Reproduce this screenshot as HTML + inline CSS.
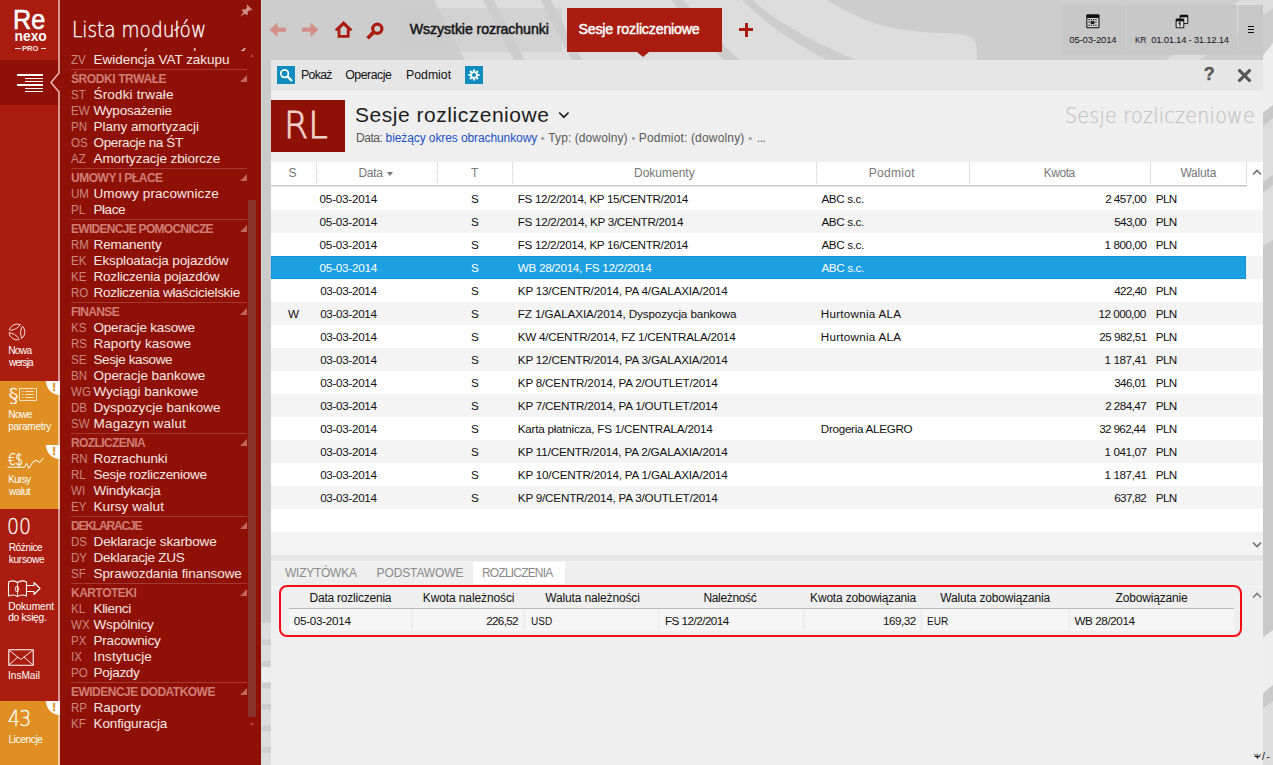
<!DOCTYPE html>
<html lang="pl">
<head>
<meta charset="utf-8">
<title>Sesje rozliczeniowe</title>
<style>
html,body{margin:0;padding:0}
body{width:1273px;height:765px;overflow:hidden;position:relative;background:#cdcdcd;font-family:"Liberation Sans",sans-serif;}
.b{position:absolute;box-sizing:border-box}
.t{position:absolute;white-space:nowrap;margin:0;padding:0}
svg{position:absolute;overflow:visible}
.lt{font-family:"DejaVu Sans Light","DejaVu Sans",sans-serif;font-weight:200}

.mi{font-size:13.5px;line-height:16px;color:#f6e8e5;width:190px;height:16px}
.mc{position:absolute;left:0;color:#c98880;font-size:13.6px;transform:scaleX(0.85);transform-origin:0 0}
.mn{position:absolute;left:22.5px}
.mh{position:absolute;left:11px;font-size:12px;line-height:14px;font-weight:bold;color:#cf7e76}
.ms{position:absolute;left:11px;width:176px;height:1px;background:#a63a30}
.mt{position:absolute;left:180px;width:0;height:0;border-left:7px solid transparent;border-bottom:7px solid #c0665d}

.row{position:absolute;left:271px;width:992px;height:23px;font-size:11.7px;line-height:23px;color:#111}
.row.alt{background:#f4f4f4}
.row.sel .fill{position:absolute;left:0;top:0;width:975.2px;height:23px;background:#1ba0e1;box-sizing:border-box;border:1px solid #0e94dc}
.row.sel{color:#fff}
.row span{position:absolute;top:0.20px;white-space:nowrap}
</style>
</head>
<body>

<svg id="bgdeco" width="1273" height="765" viewBox="0 0 1273 765" style="left:0;top:0">
<rect x="261" y="0" width="1012" height="765" fill="#cdcdcd"/>
<path d="M434 0 H827 C840 8 850 13 857.5 16.5 C872 23 885 27 899 29 C915 32 935 33 954 33.5 C970 34 977 40 977 50 V62 H466 Z" fill="#dddddd"/>
<path d="M483 0 H493.5 L525.5 62 H515 Z" fill="#cdcdcd"/>
<path d="M540.8 0 H550.8 L583 62 H573 Z" fill="#cdcdcd"/>
<path d="M671.5 0 H684 C700 22 722 45 742 62 H726 C705 42 688 22 671.5 0 Z" fill="#cdcdcd"/>
<path d="M742 0 H753 C765 12 777 20 790 27 C810 40 832 50 857 60 V62 H830 C815 54 805 48 800 45 C780 33 760 18 742 0 Z" fill="#cdcdcd"/>
<path d="M1164 62 C1190 40 1215 20 1240 0 H1273 V8 C1250 24 1225 42 1197 62 Z" fill="#dddddd"/>
<rect x="1263" y="56" width="10" height="709" fill="#c9c9c9"/>
<path d="M1263 55.5 L1273 43 V105 L1263 112.7 Z" fill="#eeeeee"/>
<path d="M1263 126.5 L1273 118 V175 L1263 182 Z M1263 193 L1273 185 V240 L1263 246 Z" fill="#dcdcdc"/>
<path d="M1263 637 L1273 630 V685 L1263 693.5 Z" fill="#eeeeee"/>
<path d="M1263 708 L1273 701 V765 H1263 Z" fill="#dcdcdc"/>
<rect x="262" y="60" width="9" height="705" fill="#cbcbcb"/>
<path d="M262 623 H271 V765 H262 Z" fill="#dedede"/>
<path d="M262 666.7 H271 V682.5 H262 Z" fill="#eeeeee"/>
<path d="M262 639.5 H271 V645.2 H262 Z M262 661.0 H271 V666.7 H262 Z M262 682.5 H271 V688.2 H262 Z M262 704.0 H271 V709.7 H262 Z M262 725.5 H271 V731.2 H262 Z M262 747.0 H271 V752.7 H262 Z" fill="#cecece"/>
</svg>
<div id="iconbar">
<div class="b" style="left:0px;top:0px;width:58px;height:765px;background:#a91c0f;"></div>
<div class="b" style="left:0px;top:60px;width:58px;height:45px;background:#8f1106;"></div>
<div class="t" style="top:2.30px;font-size:28px;line-height:36px;color:#fff;left:13.20px;letter-spacing:0.000px;transform:scaleX(0.9);transform-origin:0 0;-webkit-text-stroke:0.6px #fff;">Re</div>
<div class="t" style="top:27.92px;font-size:13.8px;line-height:18px;color:#fff;left:14.60px;font-weight:bold;letter-spacing:0.000px;">nexo</div>
<div class="t" style="top:43.57px;font-size:7.6px;line-height:10px;color:#f6e0dd;left:22.00px;font-weight:bold;letter-spacing:0.000px;">PRO</div>
<div class="b" style="left:15px;top:48px;width:5.5px;height:1.2px;background:#f3d6d2;"></div>
<div class="b" style="left:41px;top:48px;width:5.2px;height:1.2px;background:#f3d6d2;"></div>
<div class="b" style="left:17px;top:74px;width:26px;height:2px;background:#fff;"></div>
<div class="b" style="left:25px;top:78px;width:18px;height:1px;background:#fff;"></div>
<div class="b" style="left:25px;top:81px;width:18px;height:1px;background:#fff;"></div>
<div class="b" style="left:17px;top:84px;width:26px;height:2px;background:#fff;"></div>
<div class="b" style="left:25px;top:88px;width:18px;height:1px;background:#fff;"></div>
<div class="b" style="left:25px;top:91px;width:18px;height:1px;background:#fff;"></div>
<svg width="20" height="20" viewBox="-10 -10 20 20" style="left:6.5px;top:322.4px" fill="none" stroke="#f6ddd9" stroke-width="1" stroke-linecap="round" stroke-linejoin="round">
<path d="M-7.73 -2.07 A8.0 8.0 0 0 1 3.38 -7.25 Q-0.57 -2.13 -6.34 -1.70"/>
<path d="M5.66 -5.66 A8.0 8.0 0 0 1 4.59 6.55 Q2.13 0.57 4.64 -4.64"/>
<path d="M2.07 7.73 A8.0 8.0 0 0 1 -7.97 0.70 Q-1.56 1.56 1.70 6.34"/>
</svg>
<div class="t" style="top:344.00px;font-size:10.1px;line-height:13px;color:#fff;left:8.20px;letter-spacing:-0.660px;">Nowa</div>
<div class="t" style="top:356.00px;font-size:10.1px;line-height:13px;color:#fff;left:9.00px;letter-spacing:-0.900px;">wersja</div>
<div class="b" style="left:0px;top:381px;width:58px;height:64px;background:#e08f22;"></div>
<div class="t lt" style="top:383.34px;font-size:19.5px;line-height:25px;color:#fff;left:8.70px;transform:scaleX(1.0);transform-origin:0 0;-webkit-text-stroke:0.3px #fff;">§</div>
<svg width="19" height="14" viewBox="0 0 19 14" style="left:19px;top:388px" fill="none" stroke="#fff6e6" stroke-width="0.8">
<rect x="0.5" y="0.5" width="17" height="12"/>
<path d="M3 3.5 H4.6 M6.3 3.5 H14.8 M3 6.5 H4.6 M6.3 6.5 H14.8 M3 9.5 H4.6 M6.3 9.5 H14.8"/></svg>
<div class="t" style="top:408.00px;font-size:10.1px;line-height:13px;color:#fff;left:8.20px;letter-spacing:-0.510px;">Nowe</div>
<div class="t" style="top:420.00px;font-size:10.1px;line-height:13px;color:#fff;left:8.20px;letter-spacing:-0.282px;">parametry</div>
<div class="b" style="left:0px;top:445px;width:58px;height:64px;background:#e08f22;"></div>
<div class="t lt" style="top:449.12px;font-size:16.4px;line-height:21px;color:#fff;left:8.30px;letter-spacing:-0.600px;transform:scaleX(0.74);transform-origin:0 0;-webkit-text-stroke:0.3px #fff;">€$</div>
<svg width="40" height="14" viewBox="0 0 40 14" style="left:6px;top:456px" fill="none" stroke="#fff" stroke-width="1" stroke-linejoin="round" stroke-linecap="round">
<path d="M2 11.2 H18.5 L20.5 7.2 L22.7 12.5 L27 5.8 L30 4.4 L34 6.4 L37 2.2"/></svg>
<div class="t" style="top:472.50px;font-size:10.1px;line-height:13px;color:#fff;left:8.20px;letter-spacing:-0.720px;">Kursy</div>
<div class="t" style="top:484.70px;font-size:10.1px;line-height:13px;color:#fff;left:9.00px;letter-spacing:-0.496px;">walut</div>
<div class="t lt" style="top:512.48px;font-size:22px;line-height:29px;color:#fff;left:7.00px;letter-spacing:0.000px;transform:scaleX(0.86);transform-origin:0 0;-webkit-text-stroke:0.3px #fff;">00</div>
<div class="t" style="top:540.50px;font-size:10.1px;line-height:13px;color:#fff;left:8.70px;letter-spacing:-0.405px;">Różnice</div>
<div class="t" style="top:552.60px;font-size:10.1px;line-height:13px;color:#fff;left:8.70px;letter-spacing:-0.270px;">kursowe</div>
<svg width="36" height="20" viewBox="0 0 36 20" style="left:7px;top:578px" fill="none" stroke="#fff" stroke-width="1.1" stroke-linejoin="round">
<path d="M1.5 4 C5 2.3 8 2.5 10.5 4.5 C13 2.5 16 2.3 19.5 4 V18 C16 16.5 13 16.8 10.5 18.5 C8 16.8 5 16.5 1.5 18 Z"/>
<path d="M10.5 4.5 V18.5" stroke-width="0.8"/>
<path d="M19.5 7.5 H27 V4.5 L33 10.5 L27 16.5 V13.5 H19.5"/></svg>
<div class="t" style="top:582.87px;font-size:9.6px;line-height:12px;color:#fff;left:-282.60px;width:600px;text-align:center;transform:scaleX(0.85);transform-origin:50% 0;">0</div>
<div class="t" style="top:599.77px;font-size:10.2px;line-height:13px;color:#fff;left:8.20px;letter-spacing:-0.077px;">Dokument</div>
<div class="t" style="top:611.17px;font-size:10.2px;line-height:13px;color:#fff;left:8.20px;letter-spacing:-0.281px;">do księg.</div>
<svg width="27" height="18" viewBox="0 0 27 18" style="left:7.5px;top:648.5px" fill="none" stroke="#fff" stroke-width="1.1" stroke-linejoin="round">
<rect x="0.8" y="0.8" width="24.4" height="15.4"/>
<path d="M1.5 1.5 L12.8 10.5 L24.5 1.5 M1.5 15.5 L10 8 M24.5 15.5 L15.8 8" stroke-width="0.9"/></svg>
<div class="t" style="top:668.70px;font-size:10.1px;line-height:13px;color:#fff;left:8.00px;letter-spacing:0.000px;">InsMail</div>
<div class="b" style="left:0px;top:701px;width:58px;height:64px;background:#e08f22;"></div>
<div class="t lt" style="top:704.18px;font-size:22px;line-height:29px;color:#fff;left:8.00px;letter-spacing:-0.900px;transform:scaleX(0.86);transform-origin:0 0;-webkit-text-stroke:0.3px #fff;">43</div>
<div class="t" style="top:732.60px;font-size:10.1px;line-height:13px;color:#fff;left:8.40px;letter-spacing:-0.348px;">Licencje</div>
<svg width="14" height="765" viewBox="48 0 14 765" style="left:48px;top:0">
<path d="M58 0 V73.5 L50 82.5 L58 91.5 V765 H62 V0 Z" fill="#8f1106"/>
<path d="M59 0 V73 L51 82.5 L59 92 V765" fill="none" stroke="#e9b4ad" stroke-width="1.6"/>
<path d="M59 381 V509 M59 701 V765" fill="none" stroke="#f6d9ae" stroke-width="1.6"/>
</svg>
<svg width="14" height="14" viewBox="0 0 14 14" style="left:46px;top:381px"><path d="M0 0 H14 V14 A14 14 0 0 1 0 0 Z" fill="#fff"/></svg>
<div class="t" style="top:379.52px;font-size:11.5px;line-height:15px;color:#e08f22;left:-245.80px;width:600px;text-align:center;font-weight:bold;-webkit-text-stroke:0.45px #e08f22;">!</div>
<svg width="14" height="14" viewBox="0 0 14 14" style="left:46px;top:445px"><path d="M0 0 H14 V14 A14 14 0 0 1 0 0 Z" fill="#fff"/></svg>
<div class="t" style="top:443.52px;font-size:11.5px;line-height:15px;color:#e08f22;left:-245.80px;width:600px;text-align:center;font-weight:bold;-webkit-text-stroke:0.45px #e08f22;">!</div>
<svg width="14" height="14" viewBox="0 0 14 14" style="left:46px;top:701px"><path d="M0 0 H14 V14 A14 14 0 0 1 0 0 Z" fill="#fff"/></svg>
<div class="t" style="top:699.52px;font-size:11.5px;line-height:15px;color:#e08f22;left:-245.80px;width:600px;text-align:center;font-weight:bold;-webkit-text-stroke:0.45px #e08f22;">!</div>
</div>
<div id="modules">
<div class="b" style="left:60px;top:0px;width:201px;height:765px;background:#8f1106;"></div>
<div class="b" style="left:261px;top:0px;width:1px;height:765px;background:#d9dfe1;"></div>
<div class="t lt" style="top:15.89px;font-size:21.1px;line-height:27px;color:#fff;left:71.80px;letter-spacing:0.000px;transform:scaleX(0.877);transform-origin:0 0;-webkit-text-stroke:0.35px #fff;">Lista modułów</div>
<svg width="13" height="13" viewBox="0 0 13 13" style="left:239.5px;top:4px" fill="#cf8d86" stroke="none">
<path d="M7.2 0.6 L12.4 5.8 L11 6.4 L9.6 5.9 L7.6 7.9 L7.8 10.4 L6.6 11.2 L4.9 9.5 L0.3 12.7 L3.5 8.1 L1.8 6.4 L2.6 5.2 L5.1 5.4 L7.1 3.4 L6.6 2 Z"/></svg>
<div class="b" style="left:60px;top:48px;width:201px;height:717px;overflow:hidden">
<div class="t mi" style="left:11px;top:-12.18px"><span class="mc">ZS</span><span class="mn">Ewidencja VAT sprzedaży</span></div>
<div class="t mi" style="left:11px;top:3.82px"><span class="mc">ZV</span><span class="mn" style="left:22.50px;letter-spacing:-0.028px">Ewidencja VAT zakupu</span></div>
<div class="ms" style="top:21px"></div>
<div class="mh" style="top:24.24px;left:11.00px;letter-spacing:-0.405px">ŚRODKI TRWAŁE</div>
<div class="mt" style="top:27px"></div>
<div class="t mi" style="left:11px;top:38.62px"><span class="mc">ST</span><span class="mn" style="left:22.50px;letter-spacing:0.164px">Środki trwałe</span></div>
<div class="t mi" style="left:11px;top:54.62px"><span class="mc">EW</span><span class="mn" style="left:22.50px;letter-spacing:-0.252px">Wyposażenie</span></div>
<div class="t mi" style="left:11px;top:70.62px"><span class="mc">PN</span><span class="mn" style="left:22.50px;letter-spacing:-0.022px">Plany amortyzacji</span></div>
<div class="t mi" style="left:11px;top:86.62px"><span class="mc">OS</span><span class="mn" style="left:22.50px;letter-spacing:-0.374px">Operacje na ŚT</span></div>
<div class="t mi" style="left:11px;top:102.62px"><span class="mc">AZ</span><span class="mn" style="left:22.50px;letter-spacing:-0.086px">Amortyzacje zbiorcze</span></div>
<div class="ms" style="top:120px"></div>
<div class="mh" style="top:123.24px;left:11.00px;letter-spacing:-0.472px">UMOWY I PŁACE</div>
<div class="mt" style="top:126px"></div>
<div class="t mi" style="left:11px;top:137.62px"><span class="mc">UM</span><span class="mn" style="left:22.50px;letter-spacing:0.090px">Umowy pracownicze</span></div>
<div class="t mi" style="left:11px;top:153.62px"><span class="mc">PL</span><span class="mn" style="left:22.50px;letter-spacing:-0.450px">Płace</span></div>
<div class="ms" style="top:171px"></div>
<div class="mh" style="top:174.24px;left:11.00px;letter-spacing:-0.706px">EWIDENCJE POMOCNICZE</div>
<div class="mt" style="top:177px"></div>
<div class="t mi" style="left:11px;top:188.62px"><span class="mc">RM</span><span class="mn" style="left:22.50px;letter-spacing:-0.113px">Remanenty</span></div>
<div class="t mi" style="left:11px;top:204.62px"><span class="mc">EK</span><span class="mn" style="left:22.50px;letter-spacing:-0.116px">Eksploatacja pojazdów</span></div>
<div class="t mi" style="left:11px;top:220.62px"><span class="mc">KE</span><span class="mn" style="left:22.50px;letter-spacing:-0.199px">Rozliczenia pojazdów</span></div>
<div class="t mi" style="left:11px;top:236.62px"><span class="mc">RO</span><span class="mn" style="left:22.50px;letter-spacing:-0.280px">Rozliczenia właścicielskie</span></div>
<div class="ms" style="top:254px"></div>
<div class="mh" style="top:257.24px;left:11.00px;letter-spacing:-0.660px">FINANSE</div>
<div class="mt" style="top:260px"></div>
<div class="t mi" style="left:11px;top:271.62px"><span class="mc">KS</span><span class="mn" style="left:22.50px;letter-spacing:-0.193px">Operacje kasowe</span></div>
<div class="t mi" style="left:11px;top:287.62px"><span class="mc">RS</span><span class="mn" style="left:22.50px;letter-spacing:0.055px">Raporty kasowe</span></div>
<div class="t mi" style="left:11px;top:303.62px"><span class="mc">SE</span><span class="mn" style="left:22.50px;letter-spacing:-0.384px">Sesje kasowe</span></div>
<div class="t mi" style="left:11px;top:319.62px"><span class="mc">BN</span><span class="mn" style="left:22.50px;letter-spacing:-0.048px">Operacje bankowe</span></div>
<div class="t mi" style="left:11px;top:335.62px"><span class="mc">WG</span><span class="mn" style="left:22.50px;letter-spacing:-0.013px">Wyciągi bankowe</span></div>
<div class="t mi" style="left:11px;top:351.62px"><span class="mc">DB</span><span class="mn" style="left:22.50px;letter-spacing:0.016px">Dyspozycje bankowe</span></div>
<div class="t mi" style="left:11px;top:367.62px"><span class="mc">SW</span><span class="mn" style="left:22.50px;letter-spacing:0.195px">Magazyn walut</span></div>
<div class="ms" style="top:385px"></div>
<div class="mh" style="top:388.24px;left:11.00px;letter-spacing:-0.594px">ROZLICZENIA</div>
<div class="mt" style="top:391px"></div>
<div class="t mi" style="left:11px;top:402.62px"><span class="mc">RN</span><span class="mn" style="left:22.50px;letter-spacing:-0.108px">Rozrachunki</span></div>
<div class="t mi" style="left:11px;top:418.62px"><span class="mc">RL</span><span class="mn" style="left:22.50px;letter-spacing:-0.280px">Sesje rozliczeniowe</span></div>
<div class="t mi" style="left:11px;top:434.62px"><span class="mc">WI</span><span class="mn" style="left:22.50px;letter-spacing:-0.200px">Windykacja</span></div>
<div class="t mi" style="left:11px;top:450.62px"><span class="mc">EY</span><span class="mn" style="left:22.50px;letter-spacing:0.063px">Kursy walut</span></div>
<div class="ms" style="top:468px"></div>
<div class="mh" style="top:471.24px;left:11.00px;letter-spacing:-1.160px">DEKLARACJE</div>
<div class="mt" style="top:474px"></div>
<div class="t mi" style="left:11px;top:485.62px"><span class="mc">DS</span><span class="mn" style="left:22.50px;letter-spacing:-0.115px">Deklaracje skarbowe</span></div>
<div class="t mi" style="left:11px;top:501.62px"><span class="mc">DY</span><span class="mn" style="left:22.50px;letter-spacing:-0.256px">Deklaracje ZUS</span></div>
<div class="t mi" style="left:11px;top:517.62px"><span class="mc">SF</span><span class="mn" style="left:22.50px;letter-spacing:-0.085px">Sprawozdania finansowe</span></div>
<div class="ms" style="top:535px"></div>
<div class="mh" style="top:538.24px;left:11.00px;letter-spacing:-0.495px">KARTOTEKI</div>
<div class="mt" style="top:541px"></div>
<div class="t mi" style="left:11px;top:552.62px"><span class="mc">KL</span><span class="mn" style="left:22.50px;letter-spacing:-0.330px">Klienci</span></div>
<div class="t mi" style="left:11px;top:568.62px"><span class="mc">WX</span><span class="mn" style="left:22.50px;letter-spacing:-0.157px">Wspólnicy</span></div>
<div class="t mi" style="left:11px;top:584.62px"><span class="mc">PX</span><span class="mn" style="left:22.50px;letter-spacing:-0.200px">Pracownicy</span></div>
<div class="t mi" style="left:11px;top:600.62px"><span class="mc">IX</span><span class="mn" style="left:22.50px;letter-spacing:0.140px">Instytucje</span></div>
<div class="t mi" style="left:11px;top:616.62px"><span class="mc">PO</span><span class="mn" style="left:22.50px;letter-spacing:-0.285px">Pojazdy</span></div>
<div class="ms" style="top:634px"></div>
<div class="mh" style="top:637.24px;left:11.00px;letter-spacing:-0.520px">EWIDENCJE DODATKOWE</div>
<div class="mt" style="top:640px"></div>
<div class="t mi" style="left:11px;top:651.62px"><span class="mc">RP</span><span class="mn" style="left:22.50px;letter-spacing:0.000px">Raporty</span></div>
<div class="t mi" style="left:11px;top:667.62px"><span class="mc">KF</span><span class="mn" style="left:22.50px;letter-spacing:-0.115px">Konfiguracja</span></div>
</div>
<div class="b" style="left:248px;top:200px;width:8px;height:517px;background:#8a332d;"></div>
<div class="b" style="left:250px;top:54px;width:0;height:0;border-left:2.5px solid transparent;border-right:2.5px solid transparent;border-bottom:3px solid #a9473e"></div>
<div class="b" style="left:250px;top:723px;width:0;height:0;border-left:2.5px solid transparent;border-right:2.5px solid transparent;border-top:3px solid #a9473e"></div>
</div>
<div id="topbar">
<svg width="120" height="24" viewBox="266 18 120 24" style="left:266px;top:18px">
<path d="M269.5 29.7 L277.5 22.5 V27.6 H286 V31.8 H277.5 V36.9 Z" fill="#d48f88"/>
<path d="M318.5 29.7 L310.5 22.5 V27.6 H302 V31.8 H310.5 V36.9 Z" fill="#d48f88"/>
<path d="M343.6 21 L352.4 29.6 L350.6 31.3 L349.6 30.3 V37.7 H337.6 V30.3 L336.6 31.3 L334.8 29.6 Z M340.4 28.6 V35 H346.8 V28.6 L343.6 25.4 Z" fill="#a91c0f" fill-rule="evenodd"/>
<circle cx="377.3" cy="28.8" r="4.6" fill="none" stroke="#a91c0f" stroke-width="3.2"/>
<path d="M373.3 32.6 L367.6 38.2" stroke="#a91c0f" stroke-width="3.6" stroke-linecap="butt" fill="none"/>
</svg>
<div class="b" style="left:398px;top:8px;width:163.5px;height:44px;background:rgba(203,203,203,0.63);"></div>
<div class="t" style="top:19.68px;font-size:14.2px;line-height:18px;color:#151515;left:409.80px;letter-spacing:-0.104px;-webkit-text-stroke:0.5px #151515;">Wszystkie rozrachunki</div>
<div class="b" style="left:567px;top:8px;width:155px;height:44px;background:#a91c0f;"></div>
<div class="b" style="left:637px;top:52px;width:0;height:0;border-left:6px solid transparent;border-right:6px solid transparent;border-top:5.5px solid #a91c0f"></div>
<div class="t" style="top:19.68px;font-size:14.2px;line-height:18px;color:#fff;left:578.40px;letter-spacing:-0.180px;-webkit-text-stroke:0.45px #fff;">Sesje rozliczeniowe</div>
<div class="b" style="left:739px;top:28px;width:14px;height:3px;background:#a91c0f;"></div>
<div class="b" style="left:744.5px;top:22.5px;width:3px;height:14px;background:#a91c0f;"></div>
<div class="b" style="left:1061.5px;top:5px;width:63px;height:50px;background:#c8c8c8;"></div>
<div class="b" style="left:1126px;top:5px;width:110.7px;height:50px;background:#c8c8c8;"></div>
<div class="b" style="left:1238.2px;top:5px;width:24.8px;height:50px;background:#c8c8c8;"></div>
<svg width="14" height="15" viewBox="0 0 14 15" style="left:1085.8px;top:13.6px">
<rect x="0.3" y="0.3" width="13.2" height="14" rx="1" fill="#101010"/>
<rect x="1.4" y="4" width="11" height="9.2" fill="#dcdcdc"/>
<g fill="#1a1a1a"><rect x="2.4" y="5" width="1.3" height="1.3"/><rect x="4.7" y="5" width="1.3" height="1.3"/><rect x="7" y="5" width="1.3" height="1.3"/><rect x="9.3" y="5" width="1.3" height="1.3"/>
<rect x="2.4" y="7.6" width="1.3" height="1.3"/><rect x="4.6" y="7" width="3.8" height="3"/><rect x="9.3" y="7.6" width="1.3" height="1.3"/>
<rect x="2.4" y="10.6" width="1.3" height="1.3"/><rect x="4.7" y="10.6" width="1.3" height="1.3"/><rect x="7" y="10.6" width="1.3" height="1.3"/><rect x="9.3" y="10.6" width="1.3" height="1.3"/></g>
</svg>
<div class="t" style="top:34.31px;font-size:9.5px;line-height:12px;color:#14141e;left:1069.30px;letter-spacing:-0.140px;">05-03-2014</div>
<svg width="14" height="15" viewBox="0 0 14 15" style="left:1174.5px;top:13.5px">
<rect x="4.6" y="0.7" width="8.7" height="9.4" rx="1.3" fill="#101010"/>
<rect x="5.6" y="3.3" width="6.7" height="5.8" fill="#d6d6d6"/>
<rect x="0.6" y="4.6" width="8.7" height="9.7" rx="1.3" fill="#101010"/>
<rect x="1.6" y="7.4" width="6.7" height="5.9" fill="#dedede"/>
<path d="M3.6 9.6 L5 8.4 V12.3" stroke="#101010" stroke-width="1.1" fill="none"/>
</svg>
<div class="t" style="top:34.31px;font-size:9.5px;line-height:12px;color:#14141e;left:1134.50px;letter-spacing:0.000px;transform:scaleX(0.86);transform-origin:0 0;">KR</div>
<div class="t" style="top:34.31px;font-size:9.5px;line-height:12px;color:#14141e;left:1151.30px;letter-spacing:-0.265px;">01.01.14 - 31.12.14</div>
<div class="b" style="left:1247.8px;top:25.8px;width:6.4px;height:1.3px;background:#111;"></div>
<div class="b" style="left:1247.8px;top:29px;width:6.4px;height:1.3px;background:#111;"></div>
<div class="b" style="left:1247.8px;top:32.2px;width:6.4px;height:1.3px;background:#111;"></div>
</div>
<div id="main">
<div class="b" style="left:271px;top:60px;width:992px;height:30px;background:#e6e6e6;"></div>
<div class="b" style="left:271px;top:90px;width:992px;height:675px;background:#efefef;"></div>
<div class="b" style="left:277px;top:66px;width:18px;height:18px;background:#0d8cbd;"></div>
<svg width="18" height="18" viewBox="0 0 18 18" style="left:277px;top:66px" fill="none" stroke="#fff">
<circle cx="7.6" cy="7.6" r="3.8" stroke-width="1.7"/><path d="M10.6 10.6 L14.4 14.4" stroke-width="2.2" stroke-linecap="round"/></svg>
<div class="t" style="top:66.74px;font-size:12.3px;line-height:16px;color:#111;left:301.00px;letter-spacing:-0.675px;">Pokaż</div>
<div class="t" style="top:66.74px;font-size:12.3px;line-height:16px;color:#111;left:345.30px;letter-spacing:-0.489px;">Operacje</div>
<div class="t" style="top:66.74px;font-size:12.3px;line-height:16px;color:#111;left:406.00px;letter-spacing:0.000px;">Podmiot</div>
<div class="b" style="left:465px;top:66px;width:18px;height:18px;background:#0d8cbd;"></div>
<svg width="18" height="18" viewBox="-9 -9 18 18" style="left:465px;top:66px" fill="none" stroke="#fff">
<circle r="2.9" stroke-width="1.7"/>
<path d="M0 -3.6 V-5.6 M0 3.6 V5.6 M-3.6 0 H-5.6 M3.6 0 H5.6 M2.55 2.55 L3.95 3.95 M-2.55 2.55 L-3.95 3.95 M2.55 -2.55 L3.95 -3.95 M-2.55 -2.55 L-3.95 -3.95" stroke-width="2.1"/></svg>
<div class="t" style="top:63.46px;font-size:18px;line-height:23px;color:#575757;left:909.30px;width:600px;text-align:center;font-weight:bold;-webkit-text-stroke:0.3px #575757;">?</div>
<svg width="15" height="15" viewBox="0 0 15 15" style="left:1237.4px;top:67.5px"><path d="M1.6 1.6 L13.4 13.4 M13.4 1.6 L1.6 13.4" stroke="#555" stroke-width="3" fill="none"/></svg>
<div class="b" style="left:271px;top:100px;width:74px;height:52px;background:#8f1106;"></div>
<div class="t lt" style="top:101.33px;font-size:38px;line-height:49px;color:#f1cfcb;left:284.20px;letter-spacing:0.000px;transform:scaleX(0.92);transform-origin:0 0;-webkit-text-stroke:0.95px #f1cfcb;">RL</div>
<div class="t" style="top:101.22px;font-size:21px;line-height:27px;color:#1c1c1c;left:355.00px;letter-spacing:0.525px;">Sesje rozliczeniowe</div>
<svg width="12" height="8" viewBox="0 0 12 8" style="left:558px;top:110.5px"><path d="M1.2 1.5 L5.9 6.2 L10.6 1.5" fill="none" stroke="#222" stroke-width="1.7"/></svg>
<div id="filterline">
<div class="t" style="top:129.84px;font-size:12px;line-height:16px;color:#5a5a5a;left:356.00px;letter-spacing:-0.473px;">Data:</div>
<div class="t" style="top:129.84px;font-size:12px;line-height:16px;color:#1c4fc4;left:385.60px;letter-spacing:-0.097px;">bieżący okres obrachunkowy</div>
<div class="t" style="top:131.19px;font-size:11px;line-height:14px;color:#9a9a9a;left:242.80px;width:600px;text-align:center;">•</div>
<div class="t" style="top:129.84px;font-size:12px;line-height:16px;color:#5a5a5a;left:548.30px;letter-spacing:0.090px;">Typ: (dowolny)</div>
<div class="t" style="top:131.19px;font-size:11px;line-height:14px;color:#9a9a9a;left:333.50px;width:600px;text-align:center;">•</div>
<div class="t" style="top:129.84px;font-size:12px;line-height:16px;color:#5a5a5a;left:638.80px;letter-spacing:0.164px;">Podmiot: (dowolny)</div>
<div class="t" style="top:131.19px;font-size:11px;line-height:14px;color:#9a9a9a;left:450.30px;width:600px;text-align:center;">•</div>
<div class="t" style="top:129.84px;font-size:12px;line-height:16px;color:#5a5a5a;left:756.80px;letter-spacing:-0.495px;">...</div>
</div>
<div class="t lt" style="top:102.56px;font-size:20.6px;line-height:27px;color:#c4c4c4;left:1065.10px;letter-spacing:0.280px;transform:scaleX(0.925);transform-origin:0 0;-webkit-text-stroke:0.25px #c4c4c4;">Sesje rozliczeniowe</div>
<div class="b" style="left:271px;top:162px;width:992px;height:394px;background:#fff;"></div>
<div class="b" style="left:315.5px;top:163px;width:0;height:21px;border-left:1px dotted #c9c9c9"></div>
<div class="b" style="left:436.5px;top:163px;width:0;height:21px;border-left:1px dotted #c9c9c9"></div>
<div class="b" style="left:511.8px;top:163px;width:0;height:21px;border-left:1px dotted #c9c9c9"></div>
<div class="b" style="left:815.8px;top:163px;width:0;height:21px;border-left:1px dotted #c9c9c9"></div>
<div class="b" style="left:968.5px;top:163px;width:0;height:21px;border-left:1px dotted #c9c9c9"></div>
<div class="b" style="left:1149.7px;top:163px;width:0;height:21px;border-left:1px dotted #c9c9c9"></div>
<div class="b" style="left:1245.9px;top:163px;width:0;height:21px;border-left:1px dotted #c9c9c9"></div>
<div class="b" style="left:271px;top:184.5px;width:975.5px;height:1px;background:#c8c8c8;"></div>
<div class="b" style="left:271px;top:185.5px;width:975.5px;height:1px;background:#e4e4e4;"></div>
<div class="t" style="top:165.44px;font-size:12px;line-height:16px;color:#777;left:288.60px;letter-spacing:0.000px;">S</div>
<div class="t" style="top:165.44px;font-size:12px;line-height:16px;color:#777;left:358.50px;letter-spacing:-0.300px;">Data</div>
<div class="t" style="top:165.44px;font-size:12px;line-height:16px;color:#777;left:471.00px;letter-spacing:0.000px;">T</div>
<div class="t" style="top:165.44px;font-size:12px;line-height:16px;color:#777;left:634.00px;letter-spacing:0.000px;">Dokumenty</div>
<div class="t" style="top:165.44px;font-size:12px;line-height:16px;color:#777;left:868.80px;letter-spacing:0.285px;">Podmiot</div>
<div class="t" style="top:165.44px;font-size:12px;line-height:16px;color:#777;left:1043.80px;letter-spacing:-0.495px;">Kwota</div>
<div class="t" style="top:165.44px;font-size:12px;line-height:16px;color:#777;left:1180.40px;letter-spacing:-0.198px;">Waluta</div>
<div class="b" style="left:386.8px;top:172px;width:0;height:0;border-left:3.8px solid transparent;border-right:3.8px solid transparent;border-top:4px solid #777"></div>
<div class="row" style="top:187px"><span class="c1" style="left:48.60px;letter-spacing:-0.230px">05-03-2014</span><span class="c2" style="left:200.10px;letter-spacing:0.000px">S</span><span class="c3" style="left:246.80px;letter-spacing:-0.363px">FS 12/2/2014, KP 15/CENTR/2014</span><span class="c4" style="left:550.40px;letter-spacing:-0.360px">ABC s.c.</span><span class="c5" style="left:834.20px;letter-spacing:-0.566px">2 457,00</span><span class="c6" style="left:884.70px;letter-spacing:-0.585px">PLN</span></div>
<div class="row alt" style="top:210px"><span class="c1" style="left:48.60px;letter-spacing:-0.230px">05-03-2014</span><span class="c2" style="left:200.10px;letter-spacing:0.000px">S</span><span class="c3" style="left:246.80px;letter-spacing:-0.315px">FS 12/2/2014, KP 3/CENTR/2014</span><span class="c4" style="left:550.40px;letter-spacing:-0.360px">ABC s.c.</span><span class="c5" style="left:843.20px;letter-spacing:-0.612px">543,00</span><span class="c6" style="left:884.70px;letter-spacing:-0.585px">PLN</span></div>
<div class="row" style="top:233px"><span class="c1" style="left:48.60px;letter-spacing:-0.230px">05-03-2014</span><span class="c2" style="left:200.10px;letter-spacing:0.000px">S</span><span class="c3" style="left:246.80px;letter-spacing:-0.363px">FS 12/2/2014, KP 16/CENTR/2014</span><span class="c4" style="left:550.40px;letter-spacing:-0.360px">ABC s.c.</span><span class="c5" style="left:833.60px;letter-spacing:-0.437px">1 800,00</span><span class="c6" style="left:884.70px;letter-spacing:-0.585px">PLN</span></div>
<div class="row alt sel" style="top:256px"><div class="fill"></div><span class="c1" style="left:48.60px;letter-spacing:-0.230px">05-03-2014</span><span class="c2" style="left:200.10px;letter-spacing:0.000px">S</span><span class="c3" style="left:246.80px;letter-spacing:-0.305px">WB 28/2014, FS 12/2/2014</span><span class="c4" style="left:550.40px;letter-spacing:-0.360px">ABC s.c.</span></div>
<div class="row" style="top:279px"><span class="c1" style="left:49.20px;letter-spacing:-0.330px">03-03-2014</span><span class="c2" style="left:200.10px;letter-spacing:0.000px">S</span><span class="c3" style="left:246.80px;letter-spacing:-0.211px">KP 13/CENTR/2014, PA 4/GALAXIA/2014</span><span class="c5" style="left:843.20px;letter-spacing:-0.612px">422,40</span><span class="c6" style="left:884.70px;letter-spacing:-0.585px">PLN</span></div>
<div class="row alt" style="top:302px"><span class="c0" style="left:16.90px;letter-spacing:0.000px">W</span><span class="c1" style="left:49.20px;letter-spacing:-0.330px">03-03-2014</span><span class="c2" style="left:200.10px;letter-spacing:0.000px">S</span><span class="c3" style="left:246.80px;letter-spacing:-0.115px">FZ 1/GALAXIA/2014, Dyspozycja bankowa</span><span class="c4" style="left:549.80px;letter-spacing:0.240px">Hurtownia ALA</span><span class="c5" style="left:827.60px;letter-spacing:-0.541px">12 000,00</span><span class="c6" style="left:884.70px;letter-spacing:-0.585px">PLN</span></div>
<div class="row" style="top:325px"><span class="c1" style="left:49.20px;letter-spacing:-0.330px">03-03-2014</span><span class="c2" style="left:200.10px;letter-spacing:0.000px">S</span><span class="c3" style="left:246.80px;letter-spacing:-0.254px">KW 4/CENTR/2014, FZ 1/CENTRALA/2014</span><span class="c4" style="left:549.80px;letter-spacing:0.240px">Hurtownia ALA</span><span class="c5" style="left:828.20px;letter-spacing:-0.495px">25 982,51</span><span class="c6" style="left:884.70px;letter-spacing:-0.585px">PLN</span></div>
<div class="row alt" style="top:348px"><span class="c1" style="left:49.20px;letter-spacing:-0.330px">03-03-2014</span><span class="c2" style="left:200.10px;letter-spacing:0.000px">S</span><span class="c3" style="left:246.80px;letter-spacing:-0.211px">KP 12/CENTR/2014, PA 3/GALAXIA/2014</span><span class="c5" style="left:833.60px;letter-spacing:-0.437px">1 187,41</span><span class="c6" style="left:884.70px;letter-spacing:-0.585px">PLN</span></div>
<div class="row" style="top:371px"><span class="c1" style="left:49.20px;letter-spacing:-0.330px">03-03-2014</span><span class="c2" style="left:200.10px;letter-spacing:0.000px">S</span><span class="c3" style="left:246.80px;letter-spacing:-0.211px">KP 8/CENTR/2014, PA 2/OUTLET/2014</span><span class="c5" style="left:843.20px;letter-spacing:-0.612px">346,01</span><span class="c6" style="left:884.70px;letter-spacing:-0.585px">PLN</span></div>
<div class="row alt" style="top:394px"><span class="c1" style="left:49.20px;letter-spacing:-0.330px">03-03-2014</span><span class="c2" style="left:200.10px;letter-spacing:0.000px">S</span><span class="c3" style="left:246.80px;letter-spacing:-0.211px">KP 7/CENTR/2014, PA 1/OUTLET/2014</span><span class="c5" style="left:834.20px;letter-spacing:-0.566px">2 284,47</span><span class="c6" style="left:884.70px;letter-spacing:-0.585px">PLN</span></div>
<div class="row" style="top:417px"><span class="c1" style="left:49.20px;letter-spacing:-0.330px">03-03-2014</span><span class="c2" style="left:200.10px;letter-spacing:0.000px">S</span><span class="c3" style="left:246.80px;letter-spacing:-0.249px">Karta płatnicza, FS 1/CENTRALA/2014</span><span class="c4" style="left:549.80px;letter-spacing:-0.302px">Drogeria ALEGRO</span><span class="c5" style="left:828.20px;letter-spacing:-0.653px">32 962,44</span><span class="c6" style="left:884.70px;letter-spacing:-0.585px">PLN</span></div>
<div class="row alt" style="top:440px"><span class="c1" style="left:49.20px;letter-spacing:-0.330px">03-03-2014</span><span class="c2" style="left:200.10px;letter-spacing:0.000px">S</span><span class="c3" style="left:246.80px;letter-spacing:-0.185px">KP 11/CENTR/2014, PA 2/GALAXIA/2014</span><span class="c5" style="left:833.60px;letter-spacing:-0.437px">1 041,07</span><span class="c6" style="left:884.70px;letter-spacing:-0.585px">PLN</span></div>
<div class="row" style="top:463px"><span class="c1" style="left:49.20px;letter-spacing:-0.330px">03-03-2014</span><span class="c2" style="left:200.10px;letter-spacing:0.000px">S</span><span class="c3" style="left:246.80px;letter-spacing:-0.211px">KP 10/CENTR/2014, PA 1/GALAXIA/2014</span><span class="c5" style="left:833.60px;letter-spacing:-0.437px">1 187,41</span><span class="c6" style="left:884.70px;letter-spacing:-0.585px">PLN</span></div>
<div class="row alt" style="top:486px"><span class="c1" style="left:49.20px;letter-spacing:-0.330px">03-03-2014</span><span class="c2" style="left:200.10px;letter-spacing:0.000px">S</span><span class="c3" style="left:246.80px;letter-spacing:-0.211px">KP 9/CENTR/2014, PA 3/OUTLET/2014</span><span class="c5" style="left:843.20px;letter-spacing:-0.612px">637,82</span><span class="c6" style="left:884.70px;letter-spacing:-0.585px">PLN</span></div>
<div class="b" style="left:271px;top:532px;width:992px;height:24px;background:#f3f3f3;"></div>
<svg width="10" height="7" viewBox="0 0 10 7" style="left:1252px;top:168.5px"><path d="M1 5.5 L5 1.5 L9 5.5" fill="none" stroke="#707070" stroke-width="1.7"/></svg>
<svg width="10" height="7" viewBox="0 0 10 7" style="left:1252px;top:541px"><path d="M1 1.5 L5 5.5 L9 1.5" fill="none" stroke="#707070" stroke-width="1.7"/></svg>
<div class="b" style="left:271px;top:555px;width:992px;height:6px;background:#e6e6e6;"></div>
<div class="b" style="left:271px;top:560.5px;width:992px;height:1px;background:#f6f6f6;"></div>
<div class="b" style="left:473px;top:562px;width:91.6px;height:22px;background:#fff;"></div>
<div class="t" style="top:564.54px;font-size:12px;line-height:16px;color:#8a8a8a;left:285.00px;letter-spacing:-0.259px;">WIZYTÓWKA</div>
<div class="t" style="top:564.54px;font-size:12px;line-height:16px;color:#8a8a8a;left:376.60px;letter-spacing:-0.130px;">PODSTAWOWE</div>
<div class="t" style="top:564.54px;font-size:12px;line-height:16px;color:#8a8a8a;left:482.00px;letter-spacing:-0.810px;">ROZLICZENIA</div>
<div class="b" style="left:271px;top:586px;width:992px;height:1px;background:#f7f7f7;"></div>
<div class="b" style="left:289.4px;top:609px;width:944.6px;height:22px;background:#f6f6f6;"></div>
<div class="b" style="left:410.6px;top:609px;width:2.4px;height:22px;background:#efefef;"></div>
<div class="b" style="left:523.3px;top:609px;width:2.4px;height:22px;background:#efefef;"></div>
<div class="b" style="left:658px;top:609px;width:2.4px;height:22px;background:#efefef;"></div>
<div class="b" style="left:802.4px;top:609px;width:2.4px;height:22px;background:#efefef;"></div>
<div class="b" style="left:920.2px;top:609px;width:2.4px;height:22px;background:#efefef;"></div>
<div class="b" style="left:1068.3px;top:609px;width:2.4px;height:22px;background:#efefef;"></div>
<div class="b" style="left:289.4px;top:608px;width:944.6px;height:1.2px;background:#b9b9b9;"></div>
<div class="t" style="top:589.64px;font-size:12px;line-height:16px;color:#111;left:309.50px;letter-spacing:-0.222px;">Data rozliczenia</div>
<div class="t" style="top:589.64px;font-size:12px;line-height:16px;color:#111;left:422.80px;letter-spacing:-0.114px;">Kwota należności</div>
<div class="t" style="top:589.64px;font-size:12px;line-height:16px;color:#111;left:545.30px;letter-spacing:-0.152px;">Waluta należności</div>
<div class="t" style="top:589.64px;font-size:12px;line-height:16px;color:#111;left:703.40px;letter-spacing:-0.338px;">Należność</div>
<div class="t" style="top:589.64px;font-size:12px;line-height:16px;color:#111;left:810.10px;letter-spacing:-0.191px;">Kwota zobowiązania</div>
<div class="t" style="top:589.64px;font-size:12px;line-height:16px;color:#111;left:940.30px;letter-spacing:-0.165px;">Waluta zobowiązania</div>
<div class="t" style="top:589.64px;font-size:12px;line-height:16px;color:#111;left:1115.60px;letter-spacing:-0.188px;">Zobowiązanie</div>
<div class="t" style="top:612.95px;font-size:11.7px;line-height:15px;color:#111;left:293.70px;letter-spacing:-0.280px;">05-03-2014</div>
<div class="t" style="top:612.95px;font-size:11.7px;line-height:15px;color:#111;left:486.20px;letter-spacing:-0.684px;">226,52</div>
<div class="t" style="top:612.95px;font-size:11.7px;line-height:15px;color:#111;left:530.60px;letter-spacing:0.000px;transform:scaleX(0.86);transform-origin:0 0;">USD</div>
<div class="t" style="top:612.95px;font-size:11.7px;line-height:15px;color:#111;left:664.90px;letter-spacing:-0.523px;">FS 12/2/2014</div>
<div class="t" style="top:612.95px;font-size:11.7px;line-height:15px;color:#111;left:883.10px;letter-spacing:-0.540px;">169,32</div>
<div class="t" style="top:612.95px;font-size:11.7px;line-height:15px;color:#111;left:927.10px;letter-spacing:0.000px;transform:scaleX(0.86);transform-origin:0 0;">EUR</div>
<div class="t" style="top:612.95px;font-size:11.7px;line-height:15px;color:#111;left:1074.40px;letter-spacing:-0.410px;">WB 28/2014</div>
<div class="b" style="left:279.3px;top:585.4px;width:963px;height:51.6px;border:2px solid #f60d14;border-radius:8px"></div>
<svg width="10" height="7" viewBox="0 0 10 7" style="left:1252px;top:591.5px"><path d="M1 5.5 L5 1.5 L9 5.5" fill="none" stroke="#808080" stroke-width="1.7"/></svg>
<svg width="10" height="6" viewBox="0 0 10 6" style="left:1252.6px;top:752.6px"><path d="M1 1 L4.6 4.6 L8.2 1" fill="none" stroke="#8c8c8c" stroke-width="1.5"/></svg>
<div class="t" style="top:749.77px;font-size:10.2px;line-height:13px;color:#111;left:1254.30px;letter-spacing:1.710px;">+/-</div>
</div>
</body>
</html>
